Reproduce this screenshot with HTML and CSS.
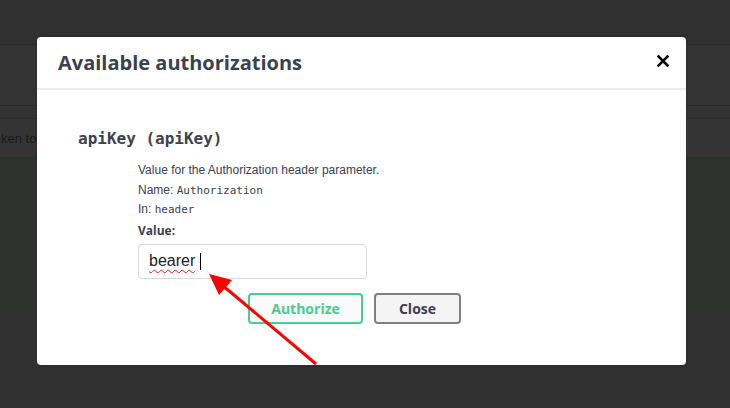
FILE: index.html
```html
<!DOCTYPE html>
<html>
<head>
<meta charset="utf-8">
<link rel="stylesheet" href="styles.css">
</head>
<body>
<div class="page">
  <div class="topbar"></div>
  <div class="band"></div>
  <div class="gap"></div>
  <div class="tokenrow"><span class="tokentext">ken to</span></div>
  <div class="opblock"></div>
  <div class="rest"></div>
</div>

<div class="modal">
  <div class="modal-head">
    <h3 class="modal-title">Available authorizations</h3>
    <span class="close-x">
      <svg width="12" height="12" viewBox="0 0 12 12"><path d="M1.5 1.5 L10.5 10.5 M10.5 1.5 L1.5 10.5" stroke="#000" stroke-width="2.6" stroke-linecap="square"/></svg>
    </span>
  </div>
  <div class="modal-body">
    <h4 class="scheme">apiKey (apiKey)</h4>
    <div class="details">
      <p class="line">Value for the Authorization header parameter.</p>
      <p class="line">Name: <code>Authorization</code></p>
      <p class="line">In: <code>header</code></p>
      <label class="value-label">Value:</label>
      <div class="input"><span class="typed">bearer</span><span class="caret"></span></div>
    </div>
    <div class="buttons">
      <button class="btn authorize">Authorize</button>
      <button class="btn close">Close</button>
    </div>
  </div>
</div>

<svg class="arrow" width="730" height="408" viewBox="0 0 730 408">
  <line x1="316" y1="364" x2="222" y2="285" stroke="#ff0000" stroke-width="3"/>
  <polygon points="209,274 232,280 219,295" fill="#ff0000"/>
</svg>
</body>
</html>
```

FILE: styles.css
```css
html, body {
  margin: 0;
  padding: 0;
}
body {
  width: 730px;
  height: 408px;
  overflow: hidden;
  background: #313131;
  font-family: "Liberation Sans", Arial, sans-serif;
  position: relative;
}
.page {
  display: flex;
  flex-direction: column;
}
.topbar {
  height: 44px;
  background: #303030;
  border-bottom: 1px solid #2a2a2a;
}
.band {
  height: 60px;
  background: #333333;
  border-bottom: 1px solid #2b2b2b;
}
.gap {
  height: 12px;
  background: #333333;
}
.tokenrow {
  height: 38px;
  background: #343434;
  border-top: 1px solid #2c2c2c;
  border-bottom: 1px solid #1f3a22;
  display: flex;
  align-items: center;
  white-space: nowrap;
}
.tokentext {
  font-size: 13px;
  color: #1a1a1a;
  margin-left: 1px;
}
.opblock {
  height: 150px;
  background: #2f312e;
}
.rest {
  height: 110px;
  background: #303030;
}

.modal {
  position: absolute;
  left: 37px;
  top: 37px;
  width: 649px;
  height: 328px;
  background: #fff;
  border-radius: 4px;
  box-shadow: 0 0 2px rgba(0,0,0,0.3);
  display: flex;
  flex-direction: column;
  color: #3b4151;
}
.modal-head {
  height: 51px;
  border-bottom: 2px solid #eeeeee;
  display: flex;
  align-items: center;
  justify-content: space-between;
  padding: 0 17px 0 21px;
}
.modal-title {
  margin: 0;
  font-family: "Open Sans", sans-serif;
  font-size: 20px;
  font-weight: 700;
  color: #3b4151;
}
.close-x {
  display: flex;
  margin-top: -3px;
}
.modal-body {
  padding: 38px 0 0 41px;
  display: flex;
  flex-direction: column;
}
.scheme {
  margin: 0;
  font-family: "DejaVu Sans Mono", monospace;
  font-size: 16px;
  font-weight: 700;
  color: #3b4151;
  line-height: 22px;
}
.details {
  padding-left: 60px;
  margin-top: 11px;
  display: flex;
  flex-direction: column;
}
.line {
  margin: 0;
  font-size: 12px;
  line-height: 19.5px;
  color: #3b4151;
}
.line code {
  font-family: "DejaVu Sans Mono", monospace;
  font-size: 11px;
}
.value-label {
  margin-top: 2px;
  font-family: "Open Sans", sans-serif;
  font-size: 12px;
  font-weight: 700;
  line-height: 18px;
  color: #3b4151;
}
.input {
  margin-top: 4px;
  width: 217px;
  height: 33px;
  border: 1px solid #d9d9d9;
  border-radius: 4px;
  display: flex;
  align-items: center;
  padding-left: 10px;
  box-sizing: content-box;
}
.typed {
  font-size: 16px;
  color: #222;
  text-decoration: underline wavy #e02020;
  text-decoration-thickness: 1px;
  text-underline-offset: 3px;
}
.caret {
  width: 1px;
  height: 17px;
  background: #000;
  margin-left: 5px;
}
.buttons {
  display: flex;
  gap: 11px;
  padding-left: 170px;
  margin-top: 14px;
}
.btn {
  height: 31px;
  border-radius: 4px;
  background: #f7f7f7;
  font-family: "Open Sans", sans-serif;
  font-size: 14px;
  font-weight: 700;
  padding: 0;
  box-sizing: border-box;
}
.authorize {
  width: 115px;
  border: 2px solid #49cc90;
  color: #49cc90;
  background: #fafafa;
}
.close {
  width: 87px;
  border: 2px solid #808080;
  color: #3b4151;
  background: #f4f4f4;
}
.arrow {
  position: absolute;
  left: 0;
  top: 0;
}
```
